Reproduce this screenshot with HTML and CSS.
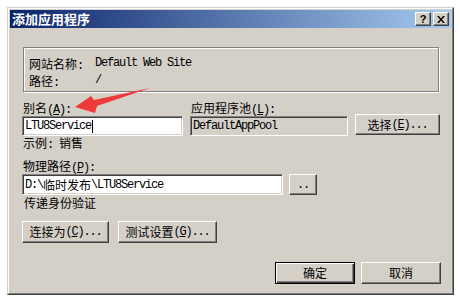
FILE: index.html
```html
<!DOCTYPE html>
<html lang="zh">
<head>
<meta charset="utf-8">
<title>添加应用程序</title>
<link rel="stylesheet" href="styles.css">
</head>
<body>
<div class="window">
  <div class="frame">
    <div class="titlebar">
      <span class="title">添加应用程序</span>
      <div class="caption-btns">
        <span class="cap-btn">?</span>
        <span class="cap-btn x">
          <svg width="8" height="7" viewBox="0 0 8 7"><path d="M0 0h2l2 2.5L6 0h2L5 3.5 8 7H6L4 4.5 2 7H0l3-3.5z" fill="#000"/></svg>
        </span>
      </div>
    </div>
    <div class="content">
      <div class="groupbox">
        <div class="info-row"><span class="info-label">网站名称<span class="m">:</span></span><span class="m">Default Web Site</span></div>
        <div class="info-row"><span class="info-label">路径<span class="m">:</span></span><span class="m">/</span></div>
      </div>

      <div class="row-top">
        <div class="col-alias">
          <div class="label">别名<span class="m">(<u>A</u>):</span></div>
          <div class="field"><span class="m">LTU8Service</span><span class="caret"></span></div>
        </div>
        <div class="col-pool">
          <div class="label">应用程序池<span class="m">(<u>L</u>):</span></div>
          <div class="field disabled"><span class="m">DefaultAppPool</span></div>
        </div>
        <div class="btn btn-select">选择<span class="m">(<u>E</u>)...</span></div>
      </div>

      <div class="example">示例<span class="m pre">: </span>销售</div>

      <div class="label label-path">物理路径<span class="m">(<u>P</u>):</span></div>
      <div class="row-path">
        <div class="field field-path"><span class="m">D:\</span>临时发布<span class="m">\LTU8Service</span></div>
        <div class="btn btn-browse"><span class="m">..</span></div>
      </div>

      <div class="label label-auth">传递身份验证</div>
      <div class="row-auth">
        <div class="btn btn-connect">连接为<span class="m">(<u>C</u>)...</span></div>
        <div class="btn btn-test">测试设置<span class="m">(<u>G</u>)...</span></div>
      </div>

      <div class="row-ok">
        <div class="btn default">确定</div>
        <div class="btn">取消</div>
      </div>
    </div>
  </div>
</div>
<svg class="arrow" width="90" height="32" viewBox="70 84 90 32">
  <polygon points="75,107 91,96 94,100 150,88 97,106 95,113" fill="#EE3A3A"/>
</svg>
</body>
</html>
```

FILE: styles.css
```css
html, body {
  margin: 0;
  padding: 0;
}
body {
  width: 460px;
  height: 301px;
  background: #ffffff;
  padding: 7px;
  box-sizing: border-box;
  position: relative;
  font-family: "Noto Sans CJK SC", sans-serif;
  font-size: 12px;
  color: #000;
}
.m {
  font-family: "Liberation Mono", "Noto Sans CJK SC", monospace;
  font-size: 12px;
  letter-spacing: -1.2px;
}
.pre { white-space: pre; }
u { text-decoration: underline; }

.window {
  width: 447px;
  height: 288px;
  box-sizing: border-box;
  border: 1px solid;
  border-color: #d4d0c8 #404040 #404040 #d4d0c8;
  background: #d4d0c8;
}
.frame {
  height: 100%;
  box-sizing: border-box;
  border: 1px solid;
  border-color: #ffffff #808080 #808080 #ffffff;
  padding: 1px;
  display: flex;
  flex-direction: column;
}
.titlebar {
  height: 18px;
  background: linear-gradient(to right, #0a246a, #a6caf0);
  display: flex;
  align-items: center;
  justify-content: space-between;
  padding: 0 2px 0 2px;
}
.title {
  color: #fff;
  font-weight: bold;
  font-size: 13px;
  line-height: 18px;
}
.caption-btns {
  display: flex;
  gap: 2px;
}
.cap-btn {
  width: 16px;
  height: 14px;
  box-sizing: border-box;
  background: #d4d0c8;
  border: 1px solid;
  border-color: #fff #404040 #404040 #fff;
  box-shadow: inset -1px -1px 0 #808080;
  display: flex;
  align-items: center;
  justify-content: center;
  font-family: "Liberation Sans", sans-serif;
  font-weight: bold;
  font-size: 11px;
  line-height: 12px;
}

.content {
  padding: 19px 10px 0 12px;
  flex: 1;
  display: flex;
  flex-direction: column;
}
.groupbox {
  margin-left: 1px;
  width: 416px;
  height: 45px;
  box-sizing: border-box;
  border: 1px solid #808080;
  box-shadow: inset 1px 1px 0 #fff, 1px 1px 0 #fff;
  padding: 7px 0 0 5px;
}
.info-row {
  display: flex;
  height: 17px;
  line-height: 17px;
}
.info-label {
  width: 66px;
}

.row-top {
  display: flex;
  align-items: flex-end;
  margin-top: 8px;
}
.label {
  height: 16px;
  line-height: 16px;
  padding-left: 1px;
}
.col-alias {
  width: 161px;
}
.col-pool {
  width: 158px;
  margin-left: 7px;
}
.field {
  height: 20px;
  box-sizing: border-box;
  background: #fff;
  border: 1px solid;
  border-color: #808080 #fff #fff #808080;
  box-shadow: inset 1px 1px 0 #404040, inset -1px -1px 0 #d4d0c8;
  padding: 0 2px;
  line-height: 18px;
  display: flex;
  align-items: center;
  white-space: nowrap;
  overflow: hidden;
}
.field.disabled {
  background: #d4d0c8;
}
.caret {
  width: 1px;
  height: 13px;
  background: #000;
  margin-left: 1px;
}
.btn {
  height: 21px;
  box-sizing: border-box;
  background: #d4d0c8;
  border: 1px solid;
  border-color: #fff #404040 #404040 #fff;
  box-shadow: inset -1px -1px 0 #808080;
  display: flex;
  align-items: center;
  justify-content: center;
  line-height: 18px;
  white-space: nowrap;
}
.btn-select {
  width: 85px;
  margin-left: 7px;
  margin-bottom: 1px;
}
.example {
  height: 14px;
  line-height: 14px;
  padding-left: 1px;
  margin-top: 0;
}
.label-path {
  margin-top: 8px;
}
.row-path {
  display: flex;
  align-items: center;
}
.field-path {
  width: 261px;
  height: 21px;
}
.btn-browse {
  width: 28px;
  margin-left: 6px;
}
.label-auth {
  margin-top: 0;
  padding-left: 2px;
}
.row-auth {
  display: flex;
  gap: 9px;
  margin-top: 10px;
}
.row-auth .btn {
  height: 22px;
}
.btn-connect { width: 87px; }
.btn-test { width: 99px; }

.row-ok {
  display: flex;
  justify-content: flex-end;
  gap: 6px;
  margin-top: 19px;
}
.row-ok .btn {
  width: 80px;
  height: 22px;
}
.btn.default {
  border: 1px solid #000;
  box-shadow: inset 1px 1px 0 #fff, inset -1px -1px 0 #404040, inset -2px -2px 0 #808080;
}

.arrow {
  position: absolute;
  left: 70px;
  top: 84px;
}
```
